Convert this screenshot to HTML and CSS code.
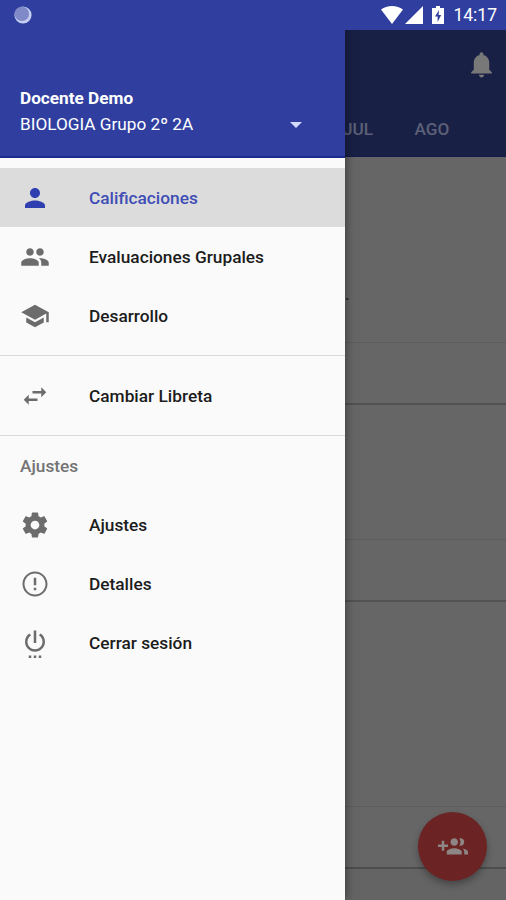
FILE: index.html
```html
<!DOCTYPE html>
<html lang="es">
<head>
<meta charset="utf-8">
<title>Calificaciones</title>
<link rel="stylesheet" href="styles.css">
</head>
<body>
<div class="screen">
  <main class="page">
    <header class="appbar">
      <div class="toolbar">
        <svg class="bell" viewBox="0 0 24 24"><path d="M12 22c1.100 0 2-.9 2-2h-4c0 1.100.9 2 2 2zm6-6v-5c0-3.070-1.630-5.640-4.500-6.320V4c0-.83-.67-1.500-1.500-1.500s-1.500.67-1.500 1.500v.68C7.640 5.360 6 7.920 6 11v5l-2 2v1h16v-1l-2-2z"/></svg>
      </div>
      <nav class="tabs"><span class="tab">JUL</span><span class="tab">AGO</span></nav>
    </header>
    <section class="card first"><div class="card-body"><span class="dot">.</span></div><div class="card-foot"></div></section>
    <section class="card second"><div class="card-body"></div><div class="card-foot"></div></section>
    <section class="card third"><div class="card-body"></div><div class="card-foot"></div></section>
  </main>

  <div class="fab"><svg viewBox="0 0 24 24"><path d="M8 10H5V7H3v3H0v2h3v3h2v-3h3v-2zm10 1c1.660 0 2.990-1.340 2.990-3S19.660 5 18 5c-.32 0-.63.05-.91.14.57.81.9 1.790.9 2.860s-.34 2.040-.9 2.860c.28.09.59.14.91.14zm-5 0c1.660 0 2.990-1.340 2.990-3S14.660 5 13 5s-3 1.340-3 3 1.340 3 3 3zm6.620 2.160c.83.73 1.380 1.660 1.380 2.840v2h3v-2c0-1.540-2.370-2.490-4.380-2.840zM13 13c-2 0-6 1-6 3v2h12v-2c0-2-4-3-6-3z"/></svg></div>

  <aside class="drawer">
    <header class="account">
      <div class="account-name">Docente Demo</div>
      <div class="account-row"><span>BIOLOGIA Grupo 2º 2A</span><svg class="caret" viewBox="0 0 12 6"><path d="M0 0h12L6 6z"/></svg></div>
    </header>
    <ul class="menu">
      <li class="item active"><svg viewBox="0 0 24 24"><path d="M12 12c2.210 0 4-1.790 4-4s-1.790-4-4-4-4 1.790-4 4 1.790 4 4 4zm0 2c-2.670 0-8 1.340-8 4v2h16v-2c0-2.660-5.330-4-8-4z"/></svg>Calificaciones</li>
      <li class="item"><svg viewBox="0 0 24 24"><path d="M16 11c1.660 0 2.990-1.340 2.990-3S17.660 5 16 5s-3 1.340-3 3 1.340 3 3 3zm-8 0c1.660 0 2.990-1.340 2.990-3S9.660 5 8 5 5 6.340 5 8s1.340 3 3 3zm0 2c-2.330 0-7 1.170-7 3.500V19h14v-2.500C15 14.170 10.330 13 8 13zm8 0c-.29 0-.62.02-.97.05C16.190 13.890 17 15.020 17 16.500V19h6v-2.500c0-2.330-4.670-3.500-7-3.500z"/></svg>Evaluaciones Grupales</li>
      <li class="item"><svg viewBox="0 0 24 24"><path d="M5 13.180v4L12 21l7-3.820v-4L12 17l-7-3.820zM12 3L1 9l11 6 9-4.910V17h2V9L12 3z"/></svg>Desarrollo</li>
    </ul>
    <ul class="menu">
      <li class="item"><svg viewBox="0 0 24 24"><path d="M6.990 11L3 15l3.990 4v-3H14v-2H6.990v-3zM21 9l-3.990-4v3H10v2h7.010v3L21 9z"/></svg>Cambiar Libreta</li>
    </ul>
    <h2 class="subheader">Ajustes</h2>
    <ul class="menu last">
      <li class="item"><svg viewBox="0 0 24 24"><path d="M19.430 12.980c.04-.32.07-.64.07-.98s-.03-.66-.07-.98l2.110-1.650c.19-.15.24-.42.12-.64l-2-3.460c-.12-.22-.39-.3-.61-.22l-2.490 1c-.52-.4-1.080-.73-1.690-.98l-.38-2.650C14.460 2.180 14.250 2 14 2h-4c-.25 0-.46.18-.49.42l-.38 2.650c-.61.25-1.170.59-1.690.98l-2.490-1c-.23-.09-.49 0-.61.22l-2 3.460c-.13.22-.07.49.12.64l2.110 1.650c-.04.32-.07.65-.07.98s.03.66.07.98l-2.110 1.650c-.19.15-.24.42-.12.64l2 3.460c.12.22.39.3.61.22l2.490-1c.52.4 1.080.73 1.690.98l.38 2.650c.03.24.24.42.49.42h4c.25 0 .46-.18.49-.42l.38-2.650c.61-.25 1.170-.59 1.690-.98l2.490 1c.23.09.49 0 .61-.22l2-3.460c.12-.22.07-.49-.12-.64l-2.110-1.650zM12 15.500c-1.930 0-3.500-1.570-3.500-3.500s1.570-3.500 3.500-3.500 3.500 1.570 3.500 3.500-1.570 3.500-3.500 3.500z"/></svg>Ajustes</li>
      <li class="item"><svg viewBox="0 0 24 24"><path d="M11 15h2v2h-2zm0-8h2v6h-2zm.99-5C6.470 2 2 6.480 2 12s4.470 10 9.990 10C17.520 22 22 17.520 22 12S17.520 2 11.990 2zM12 20.400c-4.640 0-8.400-3.760-8.400-8.400S7.360 3.600 12 3.600s8.400 3.760 8.400 8.400-3.760 8.400-8.400 8.400z"/></svg>Detalles</li>
      <li class="item"><svg viewBox="0 0 24 24"><path d="M7 24h2v-2H7v2zm4 0h2v-2h-2v2zm2-22h-2v10h2V2zm3.560 2.440l-1.450 1.450C16.840 6.940 18 8.830 18 11c0 3.310-2.690 6-6 6s-6-2.690-6-6c0-2.170 1.160-4.060 2.880-5.120L7.440 4.440C5.360 5.880 4 8.280 4 11c0 4.420 3.580 8 8 8s8-3.580 8-8c0-2.720-1.360-5.120-3.440-6.560zM15 24h2v-2h-2v2z"/></svg>Cerrar sesión</li>
    </ul>
  </aside>

  <div class="statusbar">
    <svg class="sync" viewBox="0 0 20 20"><circle cx="10" cy="10" r="8.600" fill="#c5cef2"/><circle cx="8.900" cy="8.900" r="7.200" fill="#8089c8"/></svg>
    <svg class="wifi" viewBox="0 0 22 18"><path d="M0 3.600C6-1.200 16-1.200 22 3.600L11 18z"/></svg>
    <svg class="signal" viewBox="0 0 18 18"><path d="M0 18L18 0v18z"/></svg>
    <svg class="battery" viewBox="0 0 12 18"><path d="M4 0h4v2h4v16H0V2h4z"/><path class="bolt" d="M7 4L3 10.500h2.600V16L9.200 9H6.600z"/></svg>
    <span class="clock">14:17</span>
  </div>
</div>
</body>
</html>
```

FILE: styles.css
```css
* { box-sizing: border-box; }

body {
  margin: 0;
  font-family: Roboto, "Liberation Sans", sans-serif;
}

svg { display: block; fill: currentColor; flex: none; }

.screen {
  position: relative;
  width: 506px;
  height: 900px;
  overflow: hidden;
  background: #646464;
}

.page { display: flex; flex-direction: column; }

.appbar {
  height: 157px;
  padding-top: 30px;
  background: #192045;
  border-bottom: 1px solid #131a4c;
}

.toolbar {
  display: flex;
  align-items: center;
  justify-content: flex-end;
  height: 69px;
  padding-right: 9px;
  color: #787878;
}

.bell { width: 31px; height: 31px; }

.tabs {
  display: flex;
  height: 58px;
  margin-left: 321px;
  color: #5c6078;
  font-size: 17.2px;
  font-weight: 500;
  line-height: 60px;
}

.tab { flex: 0 0 74px; text-align: center; }

.card {
  display: flex;
  flex-direction: column;
  background: #666;
  border-bottom: 2px solid #525252;
}

.first { height: 248px; }
.second { height: 197px; }
.third { height: 267px; border-bottom-color: #4d4d4d; }

.card-body {
  flex: 1;
  padding: 125px 0 0 345px;
  border-bottom: 1px solid #5d5d5d;
}

.second .card-body, .third .card-body { padding: 0; }

.card-foot { height: 60px; }

.dot {
  display: block;
  color: #222;
  font-size: 18px;
  line-height: 24px;
}

.fab {
  position: absolute;
  left: 418px;
  top: 812px;
  display: flex;
  align-items: center;
  justify-content: center;
  width: 69px;
  height: 69px;
  border-radius: 50%;
  background: #6b2323;
  color: #8e8585;
  box-shadow: 0 4px 7px rgba(0, 0, 0, 0.3);
}

.fab svg { width: 30px; height: 30px; }

.drawer {
  position: absolute;
  left: 0;
  top: 0;
  width: 345px;
  height: 900px;
  background: #fafafa;
  box-shadow: 0 0 10px rgba(0, 0, 0, 0.5);
}

.account {
  height: 158px;
  padding: 86px 43px 0 20px;
  background: #303f9f;
  border-bottom: 2px solid #1b2d8c;
  color: #fff;
  font-size: 17.2px;
}

.account-name { font-weight: 700; line-height: 24px; }

.account-row {
  display: flex;
  align-items: center;
  justify-content: space-between;
  line-height: 29px;
}

.caret { width: 12px; height: 6px; color: #d4daff; }

.menu {
  margin: 0;
  padding: 10px 0;
  list-style: none;
  border-bottom: 1px solid #d9d9d9;
}

.last { padding: 0; border: 0; }

.item {
  display: flex;
  align-items: center;
  gap: 39px;
  height: 59px;
  padding-left: 20px;
  color: #1c1c1c;
  font-size: 17.3px;
  font-weight: 500;
}

.item svg { width: 30px; height: 30px; color: #6c6c6c; }

.active { background: #dcdcdc; color: #3f4db5; }
.active svg { color: #303fb0; }

.subheader {
  height: 59px;
  margin: 0;
  padding-left: 20px;
  color: #737373;
  font-size: 17.3px;
  font-weight: 500;
  line-height: 61px;
}

.statusbar {
  position: absolute;
  left: 0;
  top: 0;
  display: flex;
  align-items: center;
  width: 506px;
  height: 30px;
  padding: 0 9px 0 13px;
  background: #303f9f;
  color: #fff;
}

.sync { width: 20px; height: 20px; margin-right: auto; }
.wifi { width: 22px; height: 18px; margin-right: 2px; }
.signal { width: 18px; height: 18px; margin-right: 9px; }
.battery { width: 12px; height: 18px; margin-right: 9px; }
.bolt { fill: #303f9f; }
.clock { font-size: 17.5px; line-height: 32px; }
```
